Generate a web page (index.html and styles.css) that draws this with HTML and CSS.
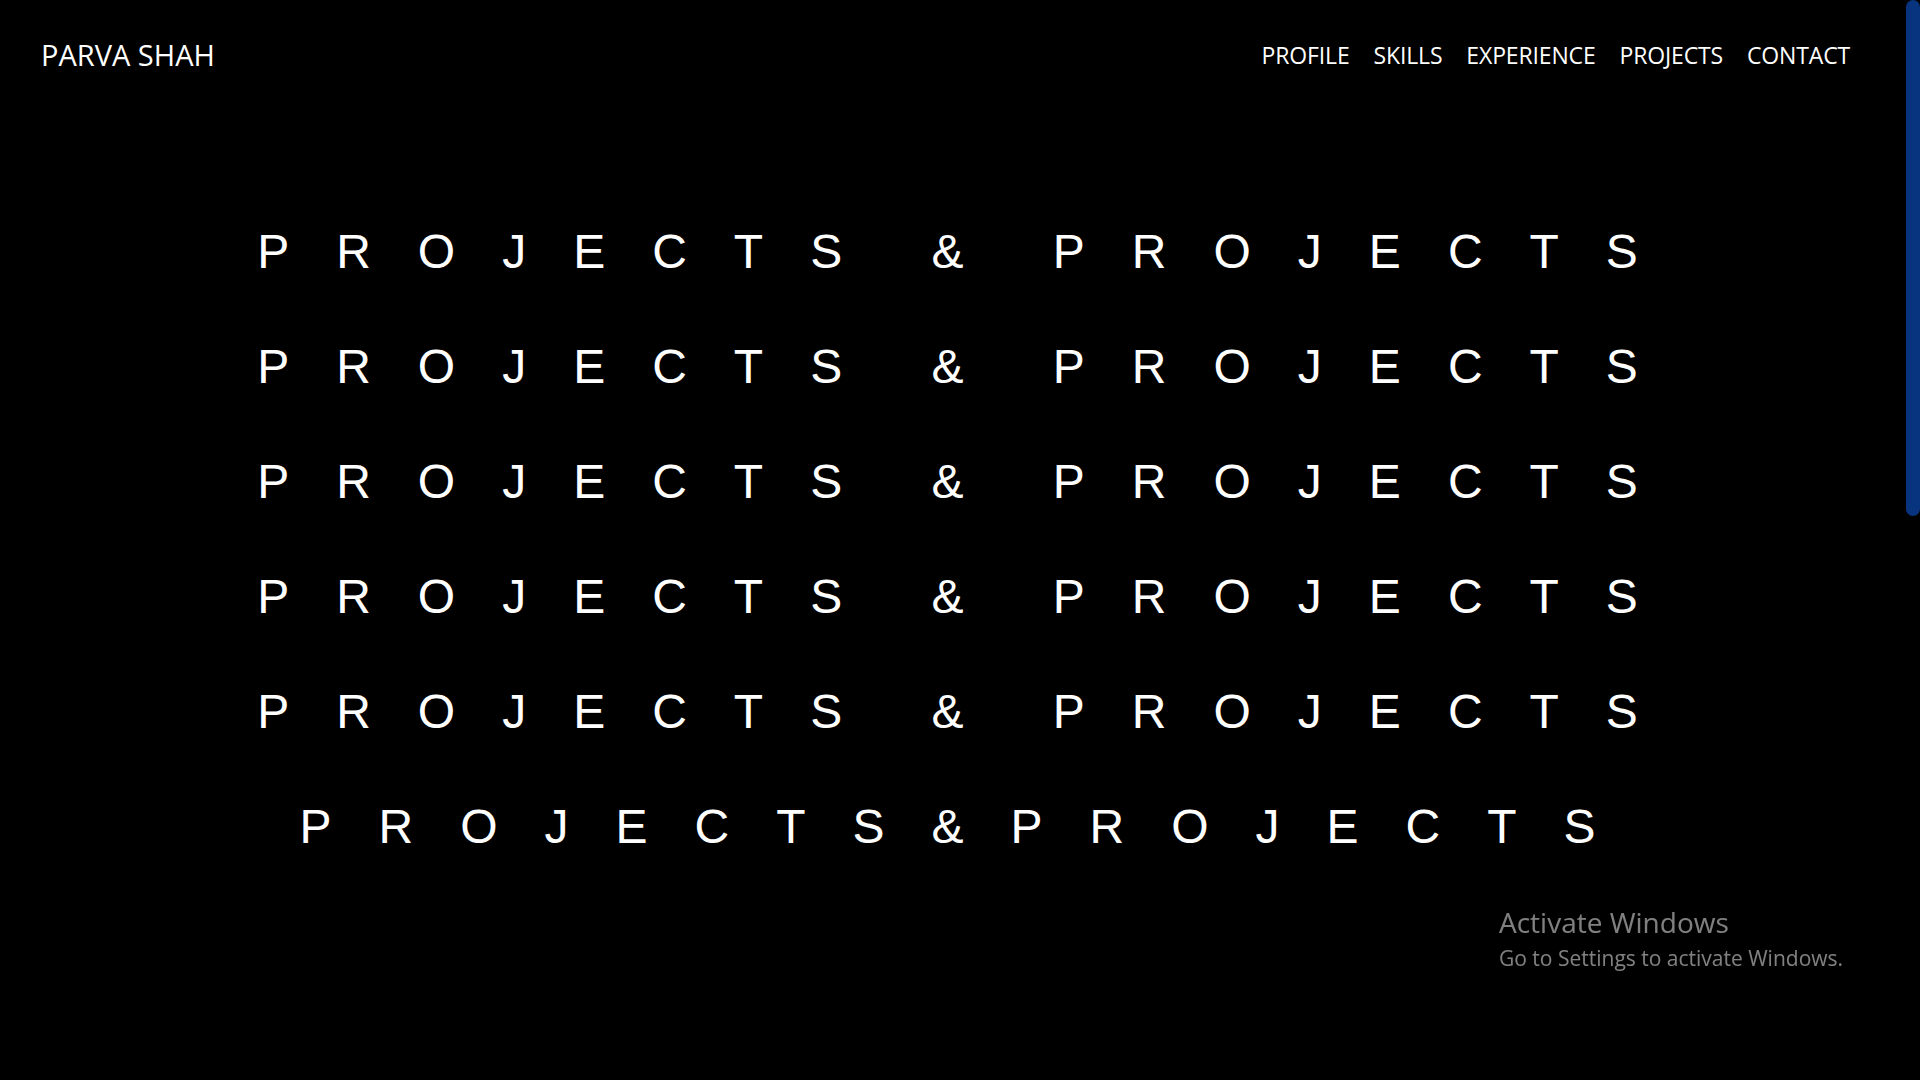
FILE: index.html
```html
<!DOCTYPE html>
<html lang="en">
<head>
<meta charset="utf-8">
<title>Parva Shah — Projects</title>
<link rel="stylesheet" href="styles.css">
</head>
<body>
<div class="page">
  <header class="topbar">
    <div class="logo">PARVA SHAH</div>
    <nav class="nav">
      <a href="#profile">PROFILE</a>
      <a href="#skills">SKILLS</a>
      <a href="#experience">EXPERIENCE</a>
      <a href="#projects">PROJECTS</a>
      <a href="#contact">CONTACT</a>
    </nav>
  </header>
  <main class="marquee" id="projects">
    <div class="row">PROJECTS &amp; PROJECTS</div>
    <div class="row">PROJECTS &amp; PROJECTS</div>
    <div class="row">PROJECTS &amp; PROJECTS</div>
    <div class="row">PROJECTS &amp; PROJECTS</div>
    <div class="row">PROJECTS &amp; PROJECTS</div>
    <div class="row tight">PROJECTS&amp;PROJECTS</div>
  </main>
</div>
<div class="scrollbar"><div class="thumb"></div></div>
<div class="activate">
  <div class="activate-title">Activate Windows</div>
  <div class="activate-sub">Go to Settings to activate Windows.</div>
</div>
</body>
</html>
```

FILE: styles.css
```css
html, body {
  margin: 0;
  padding: 0;
  background: #000;
  color: #fff;
  height: 1080px;
  overflow: hidden;
}

.page {
  margin-right: 15px;
}

.topbar {
  display: flex;
  justify-content: space-between;
  align-items: center;
  height: 109px;
  padding: 0 55px 0 41px;
  font-family: "Open Sans", "Noto Sans", sans-serif;
}

.logo {
  font-size: 29px;
  color: #fff;
}

.nav {
  display: flex;
  gap: 24px;
}

.nav a {
  color: #fff;
  text-decoration: none;
  font-size: 23px;
  letter-spacing: -0.15px;
}

.marquee {
  padding-top: 85px;
}

.row {
  font-family: "Liberation Sans", Arial, sans-serif;
  font-size: 48px;
  line-height: 115px;
  letter-spacing: 47px;
  word-spacing: -18px;
  text-align: center;
  padding-left: 37px;
  white-space: pre;
  color: #fff;
}

.scrollbar {
  position: fixed;
  top: 0;
  right: 0;
  width: 15px;
  height: 1080px;
  background: #000;
}

.thumb {
  margin-left: 1px;
  width: 14px;
  height: 516px;
  border-radius: 7px;
  background: #08347f;
}

.activate {
  position: fixed;
  left: 1499px;
  top: 904px;
  color: rgba(255, 255, 255, 0.5);
  font-family: "Open Sans", "Noto Sans", sans-serif;
}

.activate-title {
  font-size: 28px;
  line-height: 36px;
}

.activate-sub {
  font-size: 21px;
  line-height: 36px;
}
```
